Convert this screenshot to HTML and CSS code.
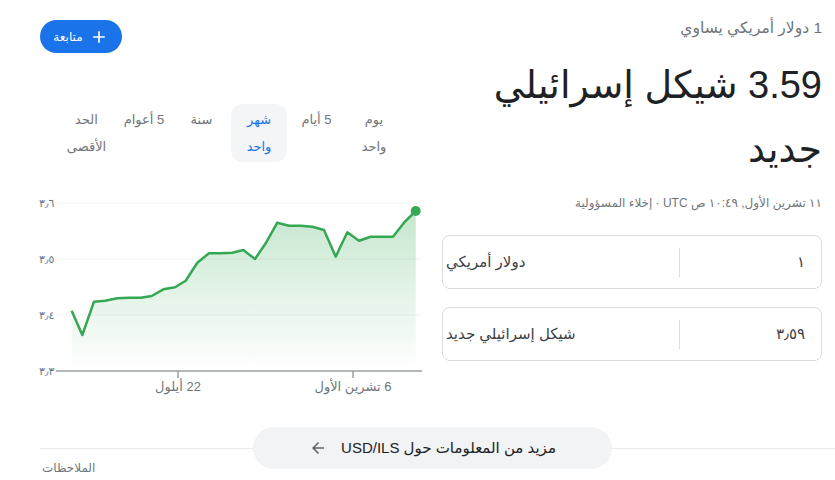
FILE: index.html
```html
<!DOCTYPE html>
<html lang="ar" dir="rtl">
<head>
    <meta charset="UTF-8">
    <meta name="viewport" content="width=device-width, initial-scale=1.0">
    <title>USD / ILS</title>
    <link rel="stylesheet" href="styles.css">
</head>
<body>
    <main class="page">
        <div class="top">
            <!-- Rate summary + converter -->
            <section class="summary">
                <div class="equals">1 دولار أمريكي يساوي</div>
                <div class="rate">3.59 شيكل إسرائيلي جديد</div>
                <div class="stamp">١١ تشرين الأول, ١٠:٤٩ ص UTC · إخلاء المسؤولية</div>

                <div class="field">
                    <span class="amount">١</span>
                    <span class="divider"></span>
                    <span class="unit">دولار أمريكي</span>
                </div>
                <div class="field">
                    <span class="amount">٣٫٥٩</span>
                    <span class="divider"></span>
                    <span class="unit">شيكل إسرائيلي جديد</span>
                </div>
            </section>

            <!-- Chart -->
            <section class="graph">
                <div class="graph-head">
                    <button class="follow">
                        <svg viewBox="0 0 24 24" width="20" height="20"><path d="M19 13h-6v6h-2v-6H5v-2h6V5h2v6h6v2z"></path></svg>
                        متابعة
                    </button>
                </div>

                <ul class="ranges">
                    <li>يوم<br>واحد</li>
                    <li>5 أيام</li>
                    <li class="active">شهر<br>واحد</li>
                    <li>سنة</li>
                    <li>5 أعوام</li>
                    <li>الحد<br>الأقصى</li>
                </ul>

                <svg class="chart" viewBox="30 190 395 210" width="395" height="210">
                    <defs>
                        <linearGradient id="area" x1="0" y1="0" x2="0" y2="1">
                            <stop offset="0" stop-color="#34a853" stop-opacity="0.28"></stop>
                            <stop offset="1" stop-color="#34a853" stop-opacity="0"></stop>
                        </linearGradient>
                    </defs>
                    <g class="grid">
                        <line x1="58" y1="203" x2="422" y2="203"></line>
                        <line x1="58" y1="259" x2="422" y2="259"></line>
                        <line x1="58" y1="315" x2="422" y2="315"></line>
                    </g>
                    <g class="axis">
                        <line x1="57" y1="371" x2="423" y2="371"></line>
                        <line x1="179" y1="371" x2="179" y2="378"></line>
                        <line x1="354" y1="371" x2="354" y2="378"></line>
                    </g>
                    <g class="ylabels">
                        <text x="40" y="207">٣٫٦</text>
                        <text x="40" y="263">٣٫٥</text>
                        <text x="40" y="319">٣٫٤</text>
                        <text x="40" y="375">٣٫٣</text>
                    </g>
                    <g class="xlabels">
                        <text x="179" y="391">22 أيلول</text>
                        <text x="354" y="391">6 تشرين الأول</text>
                    </g>
                    <path class="fill" d="M72.7,310.7 L83.3,335 L95,301.7 L106,300.7 L118.3,298.3 L130,297.7 L141.7,297.7 L152.7,296 L164.3,289.3 L176,287.3 L186.7,280.7 L198.3,262.7 L210,253.3 L221.7,253.3 L233.3,252.7 L244.3,250 L256,259 L266.7,243.3 L278.3,222.7 L290,225.7 L301.7,225.7 L313.3,226.7 L325,230 L336.7,256.7 L348.3,232.3 L360,240.7 L371.7,236.7 L383.3,236.7 L394,236.7 L405,222.7 L416.7,211 L416.7,371 L72.7,371 Z"></path>
                    <polyline class="line" points="72.7,310.7 83.3,335 95,301.7 106,300.7 118.3,298.3 130,297.7 141.7,297.7 152.7,296 164.3,289.3 176,287.3 186.7,280.7 198.3,262.7 210,253.3 221.7,253.3 233.3,252.7 244.3,250 256,259 266.7,243.3 278.3,222.7 290,225.7 301.7,225.7 313.3,226.7 325,230 336.7,256.7 348.3,232.3 360,240.7 371.7,236.7 383.3,236.7 394,236.7 405,222.7 416.7,211"></polyline>
                    <circle cx="416.7" cy="211" r="5"></circle>
                </svg>
            </section>
        </div>

        <div class="more">
            <button class="more-btn">
                مزيد من المعلومات حول USD/ILS
                <svg viewBox="0 0 24 24" width="18" height="18"><path d="M20 11H7.83l5.59-5.59L12 4l-8 8 8 8 1.41-1.41L7.83 13H20v-2z"></path></svg>
            </button>
        </div>
        <div class="notes">الملاحظات</div>
    </main>
</body>
</html>
```

FILE: styles.css
```css
/* Basic Reset */
* {
    margin: 0;
    padding: 0;
    box-sizing: border-box;
}

body {
    font-family: 'Liberation Sans', 'DejaVu Sans', sans-serif;
    background: #fff;
    color: #202124;
    overflow: hidden;
}

.page {
    padding: 18px 13px 0 30px;
}

/* Two columns: summary on the right, chart on the left */
.top {
    display: grid;
    grid-template-columns: 380px 1fr;
    column-gap: 18px;
}

/* Summary */
.equals {
    font-size: 15.5px;
    line-height: 20px;
    color: #70757a;
}

.rate {
    margin-top: 15px;
    font-size: 38px;
    line-height: 64px;
    color: #202124;
}

.stamp {
    margin-top: 14px;
    font-size: 12px;
    line-height: 16px;
    color: #70757a;
}

.field {
    display: flex;
    align-items: center;
    height: 54px;
    margin-top: 24px;
    border: 1px solid #dadce0;
    border-radius: 8px;
    font-size: 15px;
    color: #3c4043;
}

.field + .field {
    margin-top: 18px;
}

.field .amount {
    width: 141px;
    padding-right: 16px;
}

.field .divider {
    width: 1px;
    height: 29px;
    background: #dadce0;
}

.field .unit {
    flex: 1;
    text-align: left;
    padding-left: 3px;
}

/* Chart column */
.graph {
    padding-top: 2px;
}

.graph-head {
    display: flex;
    justify-content: flex-end;
    padding-left: 11px;
}

.follow {
    display: flex;
    align-items: center;
    gap: 6px;
    height: 33px;
    width: 82px;
    justify-content: center;
    border: none;
    border-radius: 17px;
    background: #1a73e8;
    color: #fff;
    font-family: inherit;
    font-size: 12px;
}

.follow svg {
    fill: #fff;
}

.ranges {
    list-style: none;
    display: flex;
    gap: 1.5px;
    margin-top: 51px;
    margin-right: 22px;
}

.ranges li {
    width: 56px;
    padding: 2px 0;
    border-radius: 12px;
    text-align: center;
    font-size: 13px;
    line-height: 27px;
    color: #70757a;
}

.ranges li.active {
    background: #f3f5f7;
    color: #1a73e8;
}

.chart {
    display: block;
    margin-top: 28px;
    direction: ltr;
}

.chart .grid line {
    stroke: #f1f3f4;
    stroke-width: 1;
}

.chart .axis line {
    stroke: #9aa0a6;
    stroke-width: 1.5;
}

.chart text {
    font-size: 11px;
    fill: #70757a;
}

.chart .xlabels text {
    direction: rtl;
    unicode-bidi: embed;
    text-anchor: middle;
    font-size: 13px;
}

.chart .fill {
    fill: url(#area);
}

.chart .line {
    fill: none;
    stroke: #34a853;
    stroke-width: 2.5;
    stroke-linejoin: round;
}

.chart circle {
    fill: #34a853;
}

/* More info pill over a hairline */
.more {
    display: flex;
    justify-content: center;
    margin: 27px -13px 0 0;
    background: linear-gradient(#e8eaed, #e8eaed) right center / calc(100% - 10px) 1px no-repeat;
}

.more-btn {
    display: flex;
    align-items: center;
    justify-content: center;
    gap: 14px;
    width: 359px;
    height: 42px;
    border: none;
    border-radius: 21px;
    background: #f1f3f4;
    color: #202124;
    font-family: inherit;
    font-size: 15px;
}

.more-btn svg {
    fill: #5f6368;
}

.notes {
    margin-top: -9px;
    padding-left: 12px;
    text-align: left;
    font-size: 12px;
    line-height: 16px;
    color: #70757a;
}
```
